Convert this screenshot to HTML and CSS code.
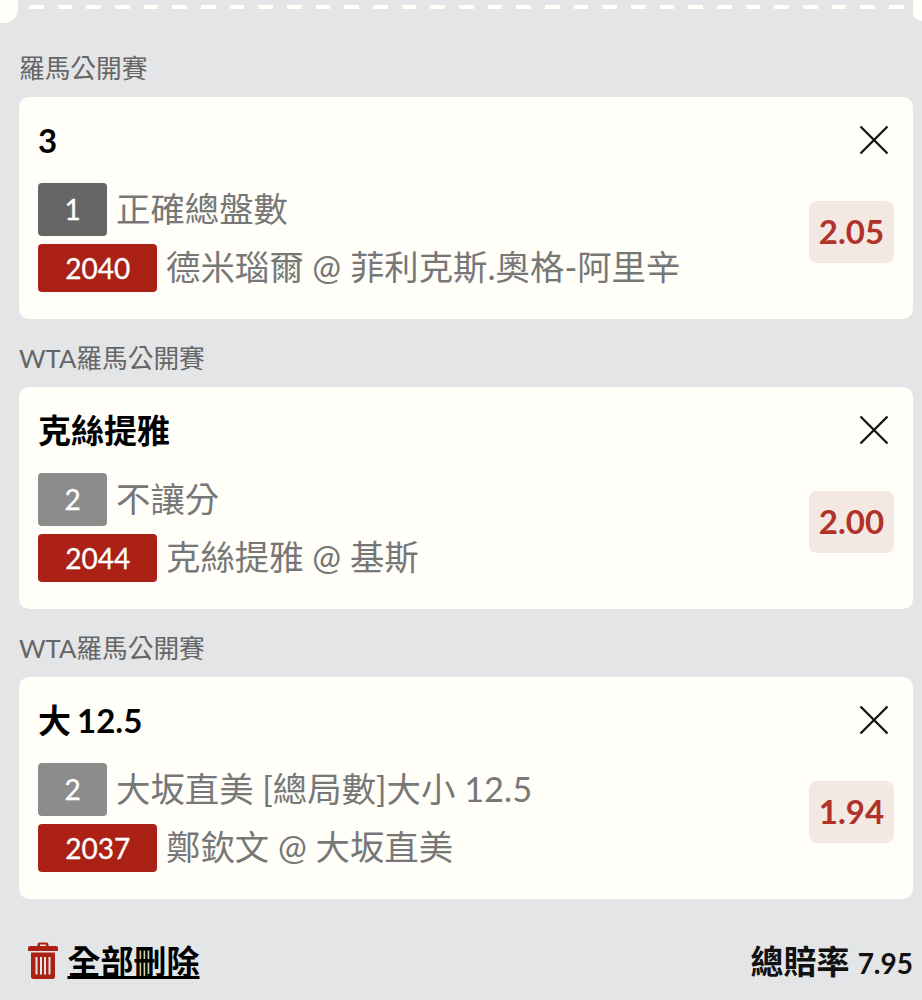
FILE: index.html
```html
<!DOCTYPE html>
<html>
<head>
    <title>投注單</title>
    <link rel="stylesheet" href="styles.css">
</head>
<body>
    <div class="ticket-edge">
        <div class="notch left"></div>
        <div class="dashes"></div>
        <div class="notch right"></div>
    </div>

    <div class="league">羅馬公開賽</div>
    <div class="bet-card">
        <div class="bet-head">
            <span class="bet-title">3</span>
            <svg class="close-icon" viewBox="0 0 30 30"><path d="M1.500 1.500L28.500 28.500M28.500 1.500L1.500 28.500"/></svg>
        </div>
        <div class="bet-body">
            <div class="bet-info">
                <div class="bet-row first">
                    <span class="leg-tag dark">1</span>
                    <span class="bet-text">正確總盤數</span>
                </div>
                <div class="bet-row">
                    <span class="match-tag">2040</span>
                    <span class="bet-text">德米瑙爾 @ 菲利克斯.奧格-阿里辛</span>
                </div>
            </div>
            <div class="odds">2.05</div>
        </div>
    </div>

    <div class="league">WTA羅馬公開賽</div>
    <div class="bet-card">
        <div class="bet-head">
            <span class="bet-title">克絲提雅</span>
            <svg class="close-icon" viewBox="0 0 30 30"><path d="M1.500 1.500L28.500 28.500M28.500 1.500L1.500 28.500"/></svg>
        </div>
        <div class="bet-body">
            <div class="bet-info">
                <div class="bet-row first">
                    <span class="leg-tag">2</span>
                    <span class="bet-text">不讓分</span>
                </div>
                <div class="bet-row">
                    <span class="match-tag">2044</span>
                    <span class="bet-text">克絲提雅 @ 基斯</span>
                </div>
            </div>
            <div class="odds">2.00</div>
        </div>
    </div>

    <div class="league">WTA羅馬公開賽</div>
    <div class="bet-card">
        <div class="bet-head">
            <span class="bet-title">大 12.5</span>
            <svg class="close-icon" viewBox="0 0 30 30"><path d="M1.500 1.500L28.500 28.500M28.500 1.500L1.500 28.500"/></svg>
        </div>
        <div class="bet-body">
            <div class="bet-info">
                <div class="bet-row first">
                    <span class="leg-tag">2</span>
                    <span class="bet-text">大坂直美 [總局數]大小 12.5</span>
                </div>
                <div class="bet-row">
                    <span class="match-tag">2037</span>
                    <span class="bet-text">鄭欽文 @ 大坂直美</span>
                </div>
            </div>
            <div class="odds">1.94</div>
        </div>
    </div>

    <div class="footer">
        <div class="delete-all">
            <svg class="trash-icon" viewBox="0 0 30 37">
                <path d="M9.500 4V2.500A2 2 0 0 1 11.500.5h7a2 2 0 0 1 2 2V4H28a2 2 0 0 1 2 2v3H0V6a2 2 0 0 1 2-2zM12 2.500V4h6V2.500z"/>
                <path fill-rule="evenodd" d="M3 10.500h24V34.500a2.500 2.500 0 0 1-2.500 2.500h-19A2.500 2.500 0 0 1 3 34.500zM7.500 15v17.500h2V15zM12 15v17.500h2V15zM16 15v17.500h2V15zM20.500 15v17.500h2V15z"/>
            </svg>
            <span class="delete-text">全部刪除</span>
        </div>
        <div class="total-odds">總賠率 <span class="total-num">7.95</span></div>
    </div>
</body>
</html>
```

FILE: styles.css
```css
* {
    box-sizing: border-box;
}

body {
    margin: 0;
    background-color: #e3e5e7;
    font-family: Lato, "Noto Sans CJK TC", sans-serif;
}

.ticket-edge {
    height: 23px;
    display: flex;
}

.notch {
    height: 23px;
    background-color: #fffef8;
}

.notch.left {
    width: 18px;
    border-bottom-right-radius: 14px;
}

.notch.right {
    width: 9px;
    height: 21px;
    margin-left: auto;
    border-bottom-left-radius: 9px;
}

.dashes {
    width: 875px;
    height: 4px;
    margin: 5px 0 0 10.7px;
    background-image: repeating-linear-gradient(to right, #fffef8 0 14.7px, transparent 14.7px 28.67px);
}

.league {
    height: 74px;
    padding: 29px 0 0 19px;
    font-size: 25.7px;
    line-height: 32px;
    color: #666;
}

.bet-card + .league {
    height: 68px;
    padding-top: 23px;
}

.bet-card {
    height: 222px;
    margin: 0 9px 0 19px;
    padding: 23px 19px 0 19px;
    background-color: #fffef8;
    border-radius: 10px;
}

.bet-head {
    height: 40px;
    display: flex;
    justify-content: space-between;
    align-items: center;
}

.bet-title {
    font-size: 33px;
    line-height: 38px;
    margin-bottom: 1px;
    font-weight: 700;
    word-spacing: -2px;
    color: #000;
}

.close-icon {
    width: 30px;
    height: 30px;
    margin: 0 5.5px 1px 0;
    stroke: #111;
    stroke-width: 2.3;
    fill: none;
}

.bet-body {
    display: flex;
    justify-content: space-between;
    align-items: center;
    margin-top: 22px;
}

.bet-row {
    display: flex;
    align-items: center;
    height: 48px;
    margin-top: 8px;
}

.bet-row.first {
    height: 53px;
    margin-top: 0;
}

.leg-tag,
.match-tag {
    margin: 1px 0 0 0.4px;
    color: #fff;
    font-size: 28px;
    -webkit-text-stroke: 0.3px #fff;
    border-radius: 4px;
    text-align: center;
}

.leg-tag {
    width: 68.6px;
    height: 53px;
    line-height: 53px;
    background-color: #8c8c8c;
}

.leg-tag.dark {
    background-color: #666;
}

.match-tag {
    width: 118.6px;
    height: 48px;
    line-height: 48px;
    background-color: #ab2116;
}

.bet-text {
    margin-left: 9px;
    font-size: 34.4px;
    line-height: 46px;
    color: #777;
    white-space: nowrap;
}

.odds {
    width: 85px;
    height: 62px;
    margin-bottom: 10px;
    line-height: 60px;
    background-color: #f3e8e2;
    border-radius: 8px;
    text-align: center;
    font-size: 33px;
    font-weight: 700;
    color: #b03228;
}

.footer {
    display: flex;
    justify-content: space-between;
    align-items: center;
    height: 46px;
    margin-top: 38px;
    padding: 0 9px 0 28px;
}

.delete-all {
    display: flex;
    align-items: center;
}

.trash-icon {
    width: 30px;
    height: 37px;
    fill: #ab2116;
}

.delete-text {
    margin-left: 9.5px;
    font-size: 33px;
    font-weight: 700;
    color: #000;
    text-decoration: underline;
}

.total-odds {
    font-size: 33px;
    font-weight: 700;
    color: #111;
}

.total-num {
    font-size: 28px;
    font-weight: 700;
}
```
